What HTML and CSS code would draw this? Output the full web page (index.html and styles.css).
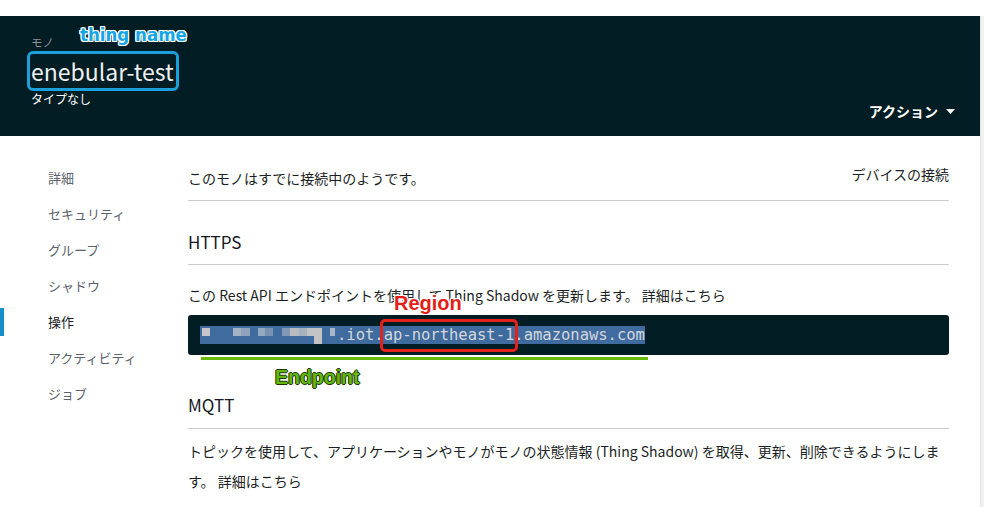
FILE: index.html
```html
<!DOCTYPE html>
<html lang="ja">
<head>
<meta charset="utf-8">
<title>enebular-test</title>
<link rel="stylesheet" href="styles.css">
</head>
<body>
<div class="page">
  <div class="main">
    <header class="header">
      <div class="header-left">
        <div class="crumb">モノ</div>
        <h1 class="title">enebular-test</h1>
        <div class="type">タイプなし</div>
      </div>
      <div class="actions">アクション
        <svg class="caret" width="9" height="5" viewBox="0 0 9 5"><path d="M0 0h9L4.5 5z" fill="#fff"/></svg>
      </div>
      <span class="note note-thing">thing name</span>
    </header>
    <div class="body">
      <nav class="sidebar">
        <div class="nav-item">詳細</div>
        <div class="nav-item">セキュリティ</div>
        <div class="nav-item">グループ</div>
        <div class="nav-item">シャドウ</div>
        <div class="nav-item active">操作</div>
        <div class="nav-item">アクティビティ</div>
        <div class="nav-item">ジョブ</div>
      </nav>
      <main class="content">
        <div class="status-row">
          <p class="status">このモノはすでに接続中のようです。</p>
          <span class="connect">デバイスの接続</span>
        </div>
        <h2 class="section-title first">HTTPS</h2>
        <p class="para">この Rest API エンドポイントを使用して Thing Shadow を更新します。 詳細はこちら</p>
        <div class="code">
          <span class="sel"><span class="mosaic"></span>.iot.ap-northeast-1.amazonaws.com</span>
          <span class="note note-region">Region</span>
          <span class="mark-region"></span>
          <span class="mark-endpoint"></span>
          <span class="note note-endpoint">Endpoint</span>
        </div>
        <h2 class="section-title second">MQTT</h2>
        <p class="para long">トピックを使用して、アプリケーションやモノがモノの状態情報 (Thing Shadow) を取得、更新、削除できるようにします。 詳細はこちら</p>
      </main>
    </div>
  </div>
  <div class="scroll"></div>
</div>
</body>
</html>
```
FILE: styles.css
```css
html, body {
  margin: 0;
  padding: 0;
  background: #fff;
}
body {
  font-family: "Noto Sans CJK JP", "Noto Sans", sans-serif;
  color: #1b1f24;
  width: 984px;
  height: 507px;
  overflow: hidden;
}
.page {
  display: flex;
  padding-top: 16px;
  height: 491px;
}
.main {
  width: 980px;
}
.scroll {
  width: 3px;
  background: #f1f1f1;
  border-left: 1px solid #e4e4e4;
}

/* header */
.header {
  position: relative;
  height: 120px;
  background: #021d24;
  display: flex;
  justify-content: space-between;
  align-items: flex-end;
  box-sizing: border-box;
}
.header-left {
  align-self: flex-start;
  padding: 19px 0 0 31px;
}
.crumb {
  font-size: 11.5px;
  line-height: 14px;
  color: #8b9398;
}
.title {
  margin: 2px 0 0 -4px;
  display: inline-block;
  border: 3px solid #1ba0dc;
  border-radius: 6px;
  padding: 4px 2px 4px 1px;
  font-size: 23px;
  line-height: 26px;
  font-weight: 400;
  color: #eef0f1;
}
.type {
  margin-top: 1px;
  font-size: 12px;
  line-height: 14px;
  color: #fff;
}
.actions {
  padding: 0 25px 16px 0;
  font-size: 14px;
  line-height: 18px;
  font-weight: 700;
  color: #fff;
  display: flex;
  align-items: center;
  gap: 8px;
}
.caret {
  display: block;
}

/* annotations */
.note {
  position: absolute;
  line-height: 1;
  white-space: nowrap;
}
.note-thing {
  left: 80px;
  top: 10px;
  font-family: "DejaVu Sans", sans-serif;
  font-stretch: condensed;
  font-weight: 700;
  font-size: 18.5px;
  color: #16a5e6;
  text-shadow: 1px 0 0 #fff, -1px 0 0 #fff, 0 1px 0 #fff, 0 -1px 0 #fff,
    1px 1px 0 #fff, -1px -1px 0 #fff, 1px -1px 0 #fff, -1px 1px 0 #fff;
}
.note-region {
  left: 206px;
  top: -22px;
  font-family: "Liberation Sans", sans-serif;
  font-weight: 700;
  font-size: 20px;
  color: #e41e17;
  text-shadow: 1px 0 0 #fff, -1px 0 0 #fff, 0 1px 0 #fff, 0 -1px 0 #fff,
    1px 1px 0 #fff, -1px -1px 0 #fff, 1px -1px 0 #fff, -1px 1px 0 #fff;
}
.note-endpoint {
  left: 87px;
  top: 53px;
  font-family: "Liberation Sans", sans-serif;
  font-weight: 700;
  font-size: 19.5px;
  color: #62b80c;
  text-shadow: 1px 0 0 #223300, -1px 0 0 #223300, 0 1px 0 #223300, 0 -1px 0 #223300;
}
.mark-region {
  position: absolute;
  left: 192px;
  top: 4px;
  width: 132px;
  height: 27px;
  border: 3px solid #e3231b;
  border-radius: 5px;
}
.mark-endpoint {
  position: absolute;
  left: 13px;
  top: 42px;
  width: 447px;
  height: 3px;
  background: #6aba0c;
}

/* body */
.body {
  display: flex;
}
.sidebar {
  width: 188px;
  flex: none;
  padding-top: 24px;
}
.nav-item {
  position: relative;
  padding-left: 48px;
  font-size: 13px;
  line-height: 36px;
  color: #5b626b;
}
.nav-item.active {
  color: #16191f;
}
.nav-item.active::before {
  content: "";
  position: absolute;
  left: 0;
  top: 4px;
  bottom: 4px;
  width: 4px;
  background: #1590c9;
}
.content {
  width: 761px;
  padding-top: 28px;
}
.status-row {
  display: flex;
  justify-content: space-between;
  align-items: flex-start;
  padding-bottom: 12px;
  border-bottom: 1px solid #c9cbcd;
}
.status {
  margin: 4px 0 0;
  font-size: 14px;
  line-height: 20px;
}
.connect {
  font-size: 14px;
  line-height: 20px;
}
.section-title {
  margin: 0;
  font-size: 17px;
  line-height: 22px;
  font-weight: 400;
  color: #16191f;
}
.section-title.first {
  margin-top: 30px;
  padding-bottom: 11px;
  border-bottom: 1px solid #c9cbcd;
}
.section-title.second {
  margin-top: 39px;
  padding-bottom: 12px;
  border-bottom: 1px solid #c9cbcd;
}
.para {
  margin: 20px 0 0;
  font-size: 14px;
  line-height: 20px;
}
.para.long {
  margin-top: 7px;
  line-height: 30px;
}
.code {
  position: relative;
  margin-top: 10px;
  height: 40px;
  box-sizing: border-box;
  padding: 10px 12px;
  background: #021d24;
  border-radius: 3px;
  font-family: "DejaVu Sans Mono", monospace;
  font-size: 15.5px;
  line-height: 20px;
  white-space: nowrap;
}
.sel {
  background: #406b9f;
  color: #d3d7db;
}
.mosaic {
  display: inline-block;
  width: 137px;
  height: 18px;
  vertical-align: text-bottom;
  background:
    linear-gradient(#c4c6c9, #c4c6c9) 2px 2px / 8px 8px no-repeat,
    linear-gradient(#a3b3c6, #a3b3c6) 33px 2px / 8px 8px no-repeat,
    linear-gradient(#8ea3bc, #8ea3bc) 41px 2px / 9px 8px no-repeat,
    linear-gradient(#93a8c1, #93a8c1) 58px 2px / 7px 8px no-repeat,
    linear-gradient(#7892b2, #7892b2) 65px 2px / 8px 8px no-repeat,
    linear-gradient(#7f98b6, #7f98b6) 82px 2px / 8px 8px no-repeat,
    linear-gradient(#b8bcc1, #b8bcc1) 90px 2px / 9px 8px no-repeat,
    linear-gradient(#a6b2c0, #a6b2c0) 99px 2px / 8px 8px no-repeat,
    linear-gradient(#c2c3c5, #c2c3c5) 107px 2px / 15px 8px no-repeat,
    linear-gradient(#c2c3c5, #c2c3c5) 114px 10px / 8px 8px no-repeat,
    linear-gradient(#a8b6c8, #a8b6c8) 130px 2px / 5px 8px no-repeat,
    #406b9f;
}
```
